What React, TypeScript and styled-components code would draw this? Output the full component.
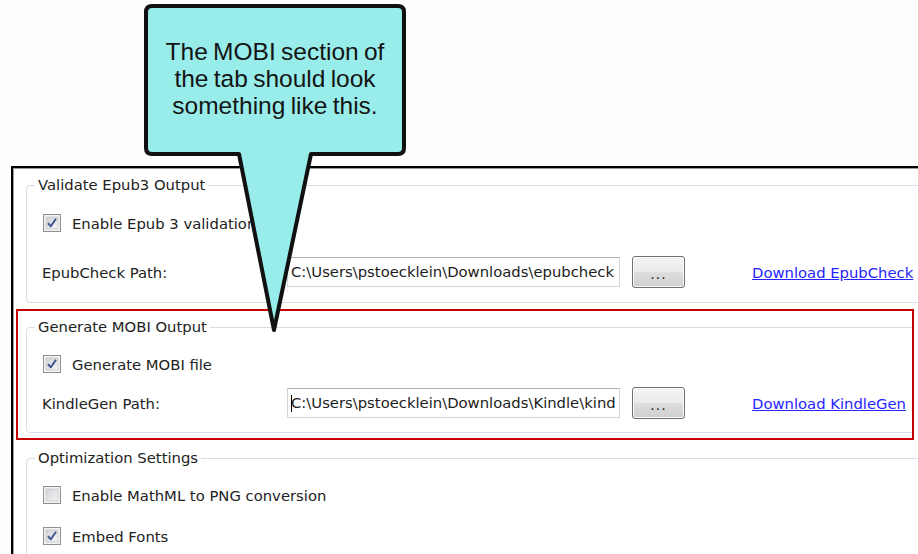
import React from 'react';
import styled, { createGlobalStyle } from 'styled-components';

const GlobalStyle = createGlobalStyle`
  html, body {
    margin: 0;
    padding: 0;
    background: #fefefe;
    overflow: hidden;
  }
  body {
    font-family: "DejaVu Sans", Tahoma, Verdana, sans-serif;
  }
`;

const Stage = styled.div`
  position: relative;
  width: 918px;
  height: 554px;
  overflow: hidden;
  background: #fefefe;
  padding-top: 166px;
  box-sizing: border-box;
`;

const Panel = styled.div`
  margin-left: 11px;
  width: 940px;
  height: 420px;
  border-top: 2px solid #000;
  border-left: 2px solid #000;
  box-shadow: inset 1px 1px 0 #9c9c9c;
  background: #fff;
  font-size: 14.8px;
  color: #222;
  overflow: hidden;
`;

const Group = styled.fieldset<{ $top: number; $bottom: number; $indent?: number }>`
  margin: ${p => p.$top}px 0 0 ${p => p.$indent ?? 13}px;
  padding: 0 0 ${p => p.$bottom}px 0;
  width: 930px;
  min-width: 0;
  box-sizing: border-box;
  border: 1px solid #d5dfe5;
  border-radius: 4px;
`;

const Legend = styled.legend`
  margin-left: 8px;
  padding: 0 3px;
  line-height: 18px;
  font-size: 14.8px;
  color: #222;
`;

const Highlight = styled.div`
  margin: 6px 0 0 3px;
  width: 898px;
  box-sizing: border-box;
  border: 2px solid #c40000;
  padding: 0 0 5px 8px;
  overflow: hidden;
`;

const CheckRow = styled.div<{ $top: number }>`
  display: flex;
  align-items: center;
  gap: 11px;
  height: 24px;
  margin-top: ${p => p.$top}px;
  padding-left: 16px;
`;

const PathRow = styled.div<{ $top: number }>`
  display: grid;
  grid-template-columns: 233px 333px 53px auto;
  column-gap: 12px;
  align-items: center;
  height: 32px;
  margin-top: ${p => p.$top}px;
  padding-left: 15px;
`;

const FieldLabel = styled.span`
  white-space: nowrap;
`;

const TextBox = styled.div`
  position: relative;
  height: 30px;
  box-sizing: border-box;
  border: 1px solid #d2d6dc;
  border-top-color: #abadb3;
  background: #fff;
  padding: 0 3px;
  line-height: 28px;
  white-space: nowrap;
  overflow: hidden;
  color: #1c1c1c;
`;

const Caret = styled.span`
  position: absolute;
  left: 3px;
  top: 6px;
  width: 1px;
  height: 17px;
  background: #000;
`;

const BrowseButton = styled.button`
  height: 32px;
  box-sizing: border-box;
  border: 1px solid #707070;
  border-radius: 3px;
  background: linear-gradient(#f4f4f4 0%, #ebebeb 48%, #dddddd 52%, #cfcfcf 100%);
  box-shadow: inset 0 0 0 1px #fbfbfb;
  font-family: "DejaVu Sans", Tahoma, sans-serif;
  font-size: 14px;
  color: #222;
  padding: 4px 0 0;
  letter-spacing: 1px;
`;

const DownloadLink = styled.a`
  margin-left: 55px;
  color: #2424ff;
  text-decoration: underline;
  white-space: nowrap;
`;

const CalloutWrap = styled.div`
  position: absolute;
  left: 141px;
  top: 3px;
  width: 268px;
  height: 334px;
`;

const CalloutShape = styled.svg`
  position: absolute;
  left: 0;
  top: 0;
`;

const CalloutText = styled.div`
  position: relative;
  padding-top: 35px;
  text-align: center;
  font-family: "Liberation Sans", Arial, sans-serif;
  font-size: 24.5px;
  line-height: 27px;
  word-spacing: -1.5px;
  color: #141414;
`;

function CheckBox({ checked }: { checked: boolean }) {
  return (
    <svg width="18" height="18" viewBox="0 0 18 18">
      <defs>
        <linearGradient id="cbfill" x1="0" y1="0" x2="1" y2="1">
          <stop offset="0" stopColor="#cfd1d4" />
          <stop offset="1" stopColor="#f7f7f7" />
        </linearGradient>
      </defs>
      <rect x="0.5" y="0.5" width="17" height="17" fill="#f3f3f3" stroke="#8e8f8f" />
      <rect x="3" y="3" width="12" height="12" fill="url(#cbfill)" stroke="#c3c6cb" strokeWidth="0.8" />
      {checked && (
        <path d="M5 9.2 L7.8 12.3 L13 4.8" fill="none" stroke="#3f5590" strokeWidth="2" strokeLinejoin="round" />
      )}
    </svg>
  );
}

function Callout() {
  return (
    <CalloutWrap>
      <CalloutShape width="268" height="334" viewBox="141 3 268 334">
        <path
          d="M152 6 H398 Q404 6 404 12 V148 Q404 154 398 154 H311 L274 330 L239 154 H152 Q146 154 146 148 V12 Q146 6 152 6 Z"
          fill="#98ece9"
          stroke="#111"
          strokeWidth="4"
          strokeLinejoin="round"
        />
      </CalloutShape>
      <CalloutText>
        The MOBI section of
        <br />
        the tab should look
        <br />
        something like this.
      </CalloutText>
    </CalloutWrap>
  );
}

export default function App() {
  return (
    <Stage>
      <GlobalStyle />
      <Panel>
        <Group $top={8} $bottom={14}>
          <Legend>Validate Epub3 Output</Legend>
          <CheckRow $top={17}>
            <CheckBox checked />
            <span>Enable Epub 3 validation</span>
          </CheckRow>
          <PathRow $top={21}>
            <FieldLabel>EpubCheck Path:</FieldLabel>
            <TextBox>C:\Users\pstoecklein\Downloads\epubcheck</TextBox>
            <BrowseButton>...</BrowseButton>
            <DownloadLink href="#">Download EpubCheck</DownloadLink>
          </PathRow>
        </Group>

        <Highlight>
          <Group $top={7} $bottom={13} $indent={0}>
            <Legend>Generate MOBI Output</Legend>
            <CheckRow $top={16}>
              <CheckBox checked />
              <span>Generate MOBI file</span>
            </CheckRow>
            <PathRow $top={11}>
              <FieldLabel>KindleGen Path:</FieldLabel>
              <TextBox>
                C:\Users\pstoecklein\Downloads\Kindle\kind
                <Caret />
              </TextBox>
              <BrowseButton>...</BrowseButton>
              <DownloadLink href="#">Download KindleGen</DownloadLink>
            </PathRow>
          </Group>
        </Highlight>

        <Group $top={9} $bottom={20}>
          <Legend>Optimization Settings</Legend>
          <CheckRow $top={16}>
            <CheckBox checked={false} />
            <span>Enable MathML to PNG conversion</span>
          </CheckRow>
          <CheckRow $top={17}>
            <CheckBox checked />
            <span>Embed Fonts</span>
          </CheckRow>
        </Group>
      </Panel>
      <Callout />
    </Stage>
  );
}
